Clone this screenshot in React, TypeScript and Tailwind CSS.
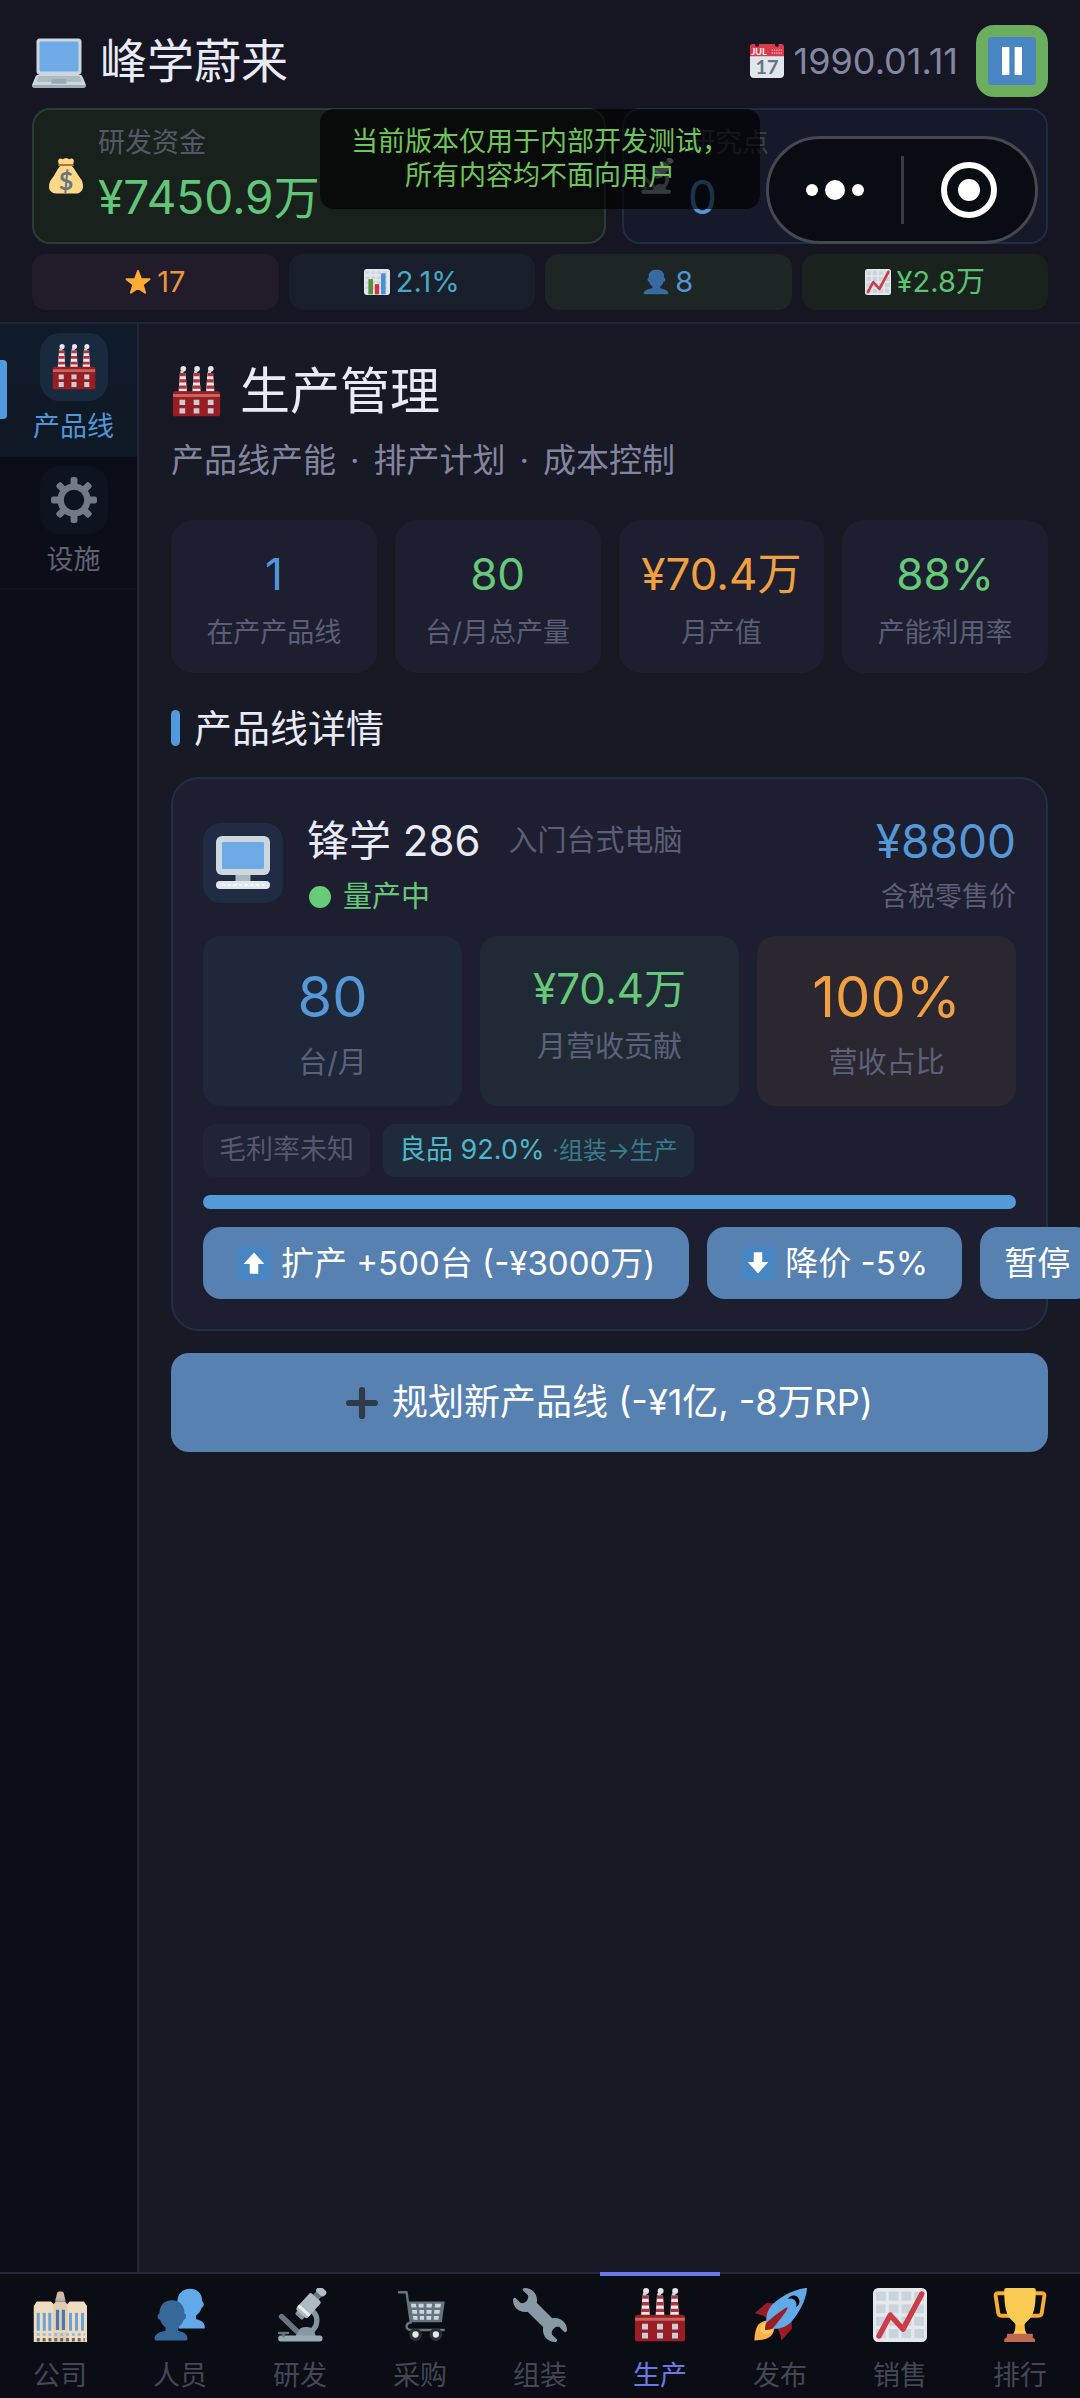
import type { ReactNode } from "react";

type IconProps = { className?: string };

function Svg({ className, children }: { className?: string; children: ReactNode }) {
  return (
    <svg viewBox="0 0 36 36" className={className} aria-hidden="true">
      {children}
    </svg>
  );
}

function LaptopIcon({ className }: IconProps) {
  return (
    <Svg className={className}>
      <path fill="#ccd6dd" d="M34 29.096c-.417-.963-.896-2.008-2-2.008h-1c1.104 0 2-.899 2-2.008V5.008C33 3.899 32.104 3 31 3H5c-1.104 0-2 .899-2 2.008V25.08c0 1.109.896 2.008 2 2.008H4c-1.104 0-1.667 1.004-2 2.008l-2 4.895C0 35.101.896 36 2 36h32c1.104 0 2-.899 2-2.009l-2-4.895z" />
      <path fill="#9aaab4" d="M.008 34.075l.006.057.17.692C.5 35.516 1.192 36 2 36h32c1.076 0 1.947-.855 1.992-1.925H.008z" />
      <path fill="#6daae6" d="M31 24.075c0 .555-.447 1.004-1 1.004H6c-.552 0-1-.449-1-1.004V6.013c0-.555.448-1.004 1-1.004h24c.553 0 1 .449 1 1.004v18.062z" />
      <path fill="#aebbc1" d="M32.906 31.042l-.76-2.175c-.239-.46-.635-.837-1.188-.837H5.11c-.552 0-.906.336-1.096.837l-.76 2.175c-.23.605.26 1.004.86 1.004h28.016c.6 0 1.045-.48.776-1.004z" />
      <path fill="#9aaab4" d="M22.375 33.113H13.5c-.6 0-.77-.361-.625-.861l.5-1.95c.094-.474.415-.302.815-.302h7.5c.4 0 .69.049.815.402l.5 1.85c.145.5-.03.861-.63.861z" />
    </Svg>
  );
}

function DesktopIcon({ className }: IconProps) {
  return (
    <Svg className={className}>
      <path fill="#aab8c2" d="M13 23h10v7H13z" />
      <rect fill="#ccd6dd" width="36" height="26" rx="4" />
      <rect fill="#6daae6" x="4" y="4" width="28" height="18" rx=".8" />
      <rect fill="#e1e8ed" y="30" width="36" height="5.4" rx="2.7" />
      <path stroke="#fff" strokeWidth="1.4" strokeDasharray="2 1.8" d="M4 32.7h28" />
    </Svg>
  );
}

function CalendarIcon({ className }: IconProps) {
  return (
    <Svg className={className}>
      <path fill="#e0e7ec" d="M36 32c0 2.209-1.791 4-4 4H4c-2.209 0-4-1.791-4-4V9h36z" />
      <path fill="#d83c4b" d="M0 3c0-2 1-3 3-3h30c2 0 3 1 3 3v10H0z" />
      <circle fill="#151621" cx="7.5" cy="1" r="2" />
      <circle fill="#151621" cx="28.5" cy="1" r="2" />
      <path stroke="#f4abba" strokeWidth="1.4" strokeDasharray="1.4 1" d="M23 6.5h11M23 9.5h11" />
      <text x="1.5" y="11.5" fontSize="9.5" fontWeight="700" fill="#fff" fontFamily="Lato">JUL</text>
      <text x="18" y="32" fontSize="21" fontWeight="700" fill="#66757f" fontFamily="Lato" textAnchor="middle">17</text>
    </Svg>
  );
}

function MoneyBagIcon({ className }: IconProps) {
  return (
    <Svg className={className}>
      <path fill="#fdd888" d="M31.9 19.6c1.6 2.4 3.5 5 3.1 9.4-.3 4-3.5 6.5-6.5 6.5H8c-4 0-7-3-7-6.5 0-4 1-6 3-8.5 3-3.5 4.5-8.5 8-12.500h12c3.500 4 5 8 7.900 11.600z" />
      <path fill="#fdd888" d="M11 6.500C10 4 9.500 1.500 11.500.7c1.500-.6 2 .8 3.200.5 1.300-.4 2-1.200 3.300-1.200s2 .8 3.300 1.200c1.200.3 1.700-1.100 3.200-.5 2 .8 1.500 3.300.5 5.800z" />
      <path stroke="#bf6952" strokeWidth="1.8" strokeLinecap="round" d="M11 7.200h14" />
      <text x="18" y="31.5" fontSize="25" fontWeight="700" fill="#67757f" fontFamily="Lato" textAnchor="middle">$</text>
    </Svg>
  );
}

function StarIcon({ className }: IconProps) {
  return (
    <Svg className={className}>
      <path fill="#ffac33" stroke="#ffac33" strokeWidth="2.5" strokeLinejoin="round" d="M18 2.500l4.100 11.200 11.900.4-9.400 7.300 3.300 11.500L18 26.200l-9.900 6.700 3.300-11.500L2 14.100l11.900-.4z" />
    </Svg>
  );
}

function BarsIcon({ className }: IconProps) {
  return (
    <Svg className={className}>
      <rect fill="#e1e8ed" width="36" height="36" rx="4" />
      <path stroke="#ccd6dd" strokeWidth="4" strokeDasharray="5.5 2.5" d="M2 5h32M2 12h32M2 19h32M2 26h32" />
      <path fill="#5c913b" d="M6 14h6.500v21H6z" />
      <path fill="#dd2e44" d="M15 21h6v14h-6z" />
      <path fill="#4a90d6" d="M23.500 6H30v29h-6.500z" />
    </Svg>
  );
}

function PersonIcon({ className }: IconProps) {
  return (
    <Svg className={className}>
      <path fill="#366aa0" d="M24 26.799v-2.566c2-1.348 4.080-3.779 4.703-6.896.186.103.206.170.413.170.991 0 1.709-1.287 1.709-2.873 0-1.562-.823-2.827-1.794-2.865.187-.674.293-1.577.293-2.735C29.324 5.168 26 .527 18.541.527c-6.629 0-10.777 4.641-10.777 8.507 0 1.123.069 2.043.188 2.755-.911.137-1.629 1.352-1.629 2.845 0 1.587.804 2.873 1.796 2.873.206 0 .025-.067.209-.170C8.952 20.453 11 22.885 13 24.232v2.414c-5 .645-12 3.437-12 6.230v1.061C1 35 2.076 35 3.137 35h29.725C33.924 35 35 35 35 33.938v-1.061c0-2.615-6-5.225-11-6.078z" />
    </Svg>
  );
}

function PeopleIcon({ className }: IconProps) {
  return (
    <Svg className={className}>
      <path fill="#62a9ea" d="M16.200 9.500c0-5.500 3.500-9 8.600-9 5 0 8 3.300 8 8.300.8.700 1.200 1.400 1 2.600-.2 1.300-1 1.600-1.400 1.800-.6 2.200-1.900 4-3.700 5.200v2.400c2.800.5 5.800 2 5.800 5V27H17z" />
      <path fill="#386899" d="M4.300 17c0-5.400 3.200-8.800 8.300-8.800s8.400 3.400 8.400 8.800c.8.200 1.200 1 1 2.200-.2 1.300-.8 2-1.500 2-.7 2-2 3.800-3.700 4.900v2.400c2.800.6 6.200 2 6.200 5.200 0 .8-.3 1.300-1.200 1.300H2.200c-.8 0-1.200-.5-1.200-1.300 0-3.200 4.200-4.600 7.300-5.200v-2.400c-1.700-1.100-3-2.900-3.600-4.900-.8 0-1.400-.7-1.600-2-.1-1.200.3-2 1.200-2.200z" />
    </Svg>
  );
}

function TrendIcon({ className }: IconProps) {
  return (
    <Svg className={className}>
      <rect fill="#e4e9ed" width="36" height="36" rx="3.5" />
      <path stroke="#cbd4da" strokeWidth="6" strokeDasharray="6.5 2" d="M2 5.500h32M2 13.800h32M2 22.100h32M2 30.400h32" />
      <path fill="none" stroke="#cd3b49" strokeWidth="3.6" strokeLinecap="round" strokeLinejoin="round" d="M4 32L11.500 18l8.500 9.500L32.500 4" />
    </Svg>
  );
}

function FactoryIcon({ className }: IconProps) {
  return (
    <Svg className={className}>
      {[8.3, 18, 27.7].map((x) => (
        <g key={x}>
          <circle cx={x + 0.4} cy="2" r="2" fill="#e1e8ed" />
          <circle cx={x - 0.6} cy="4.2" r="1.2" fill="#ccd6dd" />
          <path d={`M${x - 2} 5h4l.9 13h-5.800z`} fill="#f5e8ea" />
          <path d={`M${x - 2} 5h4l.1 2.200h-4.200zM${x - 2.3} 9.400h4.600l.1 2.200h-4.800zM${x - 2.6} 13.800h5.200l.1 2.200h-5.400z`} fill="#b0323f" />
        </g>
      ))}
      <path fill="#991d24" d="M1.300 19.500c0-1 .7-1.700 1.700-1.700h30c1 0 1.700.7 1.700 1.700v14.800c0 .7-.5 1.200-1.200 1.200h-31c-.7 0-1.200-.5-1.200-1.200z" />
      <path fill="#c8655a" d="M1.500 19.800h33v2.100h-33z" />
      <path fill="#c9cdd4" d="M6 23.800h4v3.800H6zM16 23.800h4v3.800h-4zM26 23.800h4v3.800h-4zM6 29.800h4v3.800H6zM16 29.800h4v3.800h-4zM26 29.800h4v3.800h-4z" />
    </Svg>
  );
}

function GearIcon({ className }: IconProps) {
  return (
    <Svg className={className}>
      <circle cx="18" cy="18" r="10.5" fill="none" stroke="#737a84" strokeWidth="5" />
      {[0, 45, 90, 135, 180, 225, 270, 315].map((angle) => (
        <rect key={angle} x="15.3" y="0" width="5.4" height="8" rx="1.8" fill="#737a84" transform={`rotate(${angle} 18 18)`} />
      ))}
    </Svg>
  );
}

function OfficeIcon({ className }: IconProps) {
  return (
    <Svg className={className}>
      <path fill="#f0dcc0" d="M.5 12l2-3h9.500l2 2v25H.5zM22.500 11l2-2h9.500l2 3v24H22.500z" />
      <path fill="#e2cdb3" d="M13.500 11l1.800-2h5.900l1.800 2v25h-9.500z" />
      <path fill="#d9b79c" d="M16 3.500c0-.8.700-1.200 2.200-1.200s2.300.4 2.300 1.200l1.300 5.500h-7z" />
      <path stroke="#8fb4d2" strokeWidth="1.6" strokeDasharray="1.6 .7" d="M15 7.800h6.500" />
      <path fill="#6ba3d6" d="M2.500 16.500h2v12h-2zM6.500 16.500h2v12h-2zM10.200 16.500h2v12h-2zM24 16.500h2v12h-2zM28 16.500h2v12h-2zM32 16.500h2v12h-2z" />
      <path fill="#4a78ad" d="M15.300 14.500h2.100V28h-2.100zM19.200 14.500h2.100V28h-2.100z" />
      <path stroke="#8ebbe2" strokeWidth="1.8" strokeDasharray="2 1.9" d="M2.500 31h32" />
      <path stroke="#f0dcc0" strokeWidth=".8" d="M.5 29h35.500" />
      <path stroke="#6c6763" strokeWidth="2.2" strokeDasharray="2 1.9" d="M2.500 34.500h32" />
    </Svg>
  );
}

function MicroscopeIcon({ className }: IconProps) {
  return (
    <Svg className={className}>
      <path stroke="#6b7580" strokeWidth="3.6" strokeLinecap="round" d="M5.700 19l12 11.500" />
      <path fill="none" stroke="#8494a1" strokeWidth="3.6" d="M26.500 15.500c4 3.500 3.500 10-1 13.500" />
      <path fill="#8899a6" d="M15 32c1.500-1.500 1.500-6 7-6s5.500 3 6.500 6z" />
      <rect x="3.5" y="31.7" width="29.5" height="4" rx="1.8" fill="#9aaab5" />
      <path stroke="#66757f" strokeWidth="1.6" strokeLinecap="round" d="M4 30h6M7 30v2" />
      <g transform="rotate(42 23 12.5)">
        <rect x="20.5" y="-1.8" width="5" height="7" fill="#66757f" />
        <rect x="19.5" y="-3.5" width="7" height="4.6" rx="1.8" fill="#b4c0c8" />
        <rect x="19.8" y="18" width="6.5" height="3.6" rx="1" fill="#8494a1" />
        <rect x="18" y="4" width="10" height="15" rx="1.5" fill="#aebbc4" />
        <path fill="#e8eef2" d="M18 15h10v2H18z" />
      </g>
    </Svg>
  );
}

function CartIcon({ className }: IconProps) {
  return (
    <Svg className={className}>
      <path fill="none" stroke="#66757f" strokeWidth="1.6" strokeLinecap="round" strokeLinejoin="round" d="M4 2.800h5L11.900 23c-3.600.3-4 5 0 5h22" />
      <path fill="#66757f" d="M10.500 9H34.500l-2 13.800H12.300z" />
      <path fill="#ccd6dd" d="M12 10.500h3.300l.3 2.500h-3.300zM17 10.500h3.400v2.500h-3.200zM22.300 10.500h3.700l-.2 2.500h-3.500zM28 10.500h4l-.4 2.500h-3.800zM12.700 14.600h3.200l.2 2.500h-3.100zM17.500 14.600h3.200v2.500h-3zM22.300 14.600h3.500l-.2 2.500h-3.300zM27.600 14.600h3.700l-.4 2.500h-3.500zM13.300 18.700h3l.1 2.400h-2.800zM17.900 18.700h2.800v2.400h-2.700zM22.300 18.700h3.200l-.1 2.400h-3.100zM27.300 18.700h3.300l-.3 2.400h-3.200z" />
      <circle cx="15" cy="31" r="3.2" fill="#e6e9ec" stroke="#292f33" strokeWidth="2.2" />
      <circle cx="28.6" cy="31" r="3.2" fill="#e6e9ec" stroke="#292f33" strokeWidth="2.2" />
    </Svg>
  );
}

function WrenchIcon({ className }: IconProps) {
  return (
    <Svg className={className}>
      <path fill="#8899a6" d="M27.989 19.977c-.622 0-1.225.078-1.806.213L15.811 9.818c.134-.581.212-1.184.212-1.806C16.023 3.587 12.436 0 8.012 0 7.110 0 5.910.916 6.909 1.915l2.997 2.997s.999 1.998-.999 3.995-3.996.998-3.996.998L1.915 6.909C.916 5.910 0 7.105 0 8.012c0 4.425 3.587 8.012 8.012 8.012.622 0 1.225-.078 1.806-.212l10.371 10.371c-.135.581-.213 1.184-.213 1.806 0 4.425 3.588 8.011 8.012 8.011.901 0 2.101-.916 1.102-1.915l-2.997-2.997s-.999-1.998.999-3.995 3.995-.999 3.995-.999l2.997 2.997c1 .999 1.916-.196 1.916-1.102 0-4.425-3.587-8.012-8.011-8.012z" />
    </Svg>
  );
}

function RocketIcon({ className }: IconProps) {
  return (
    <Svg className={className}>
      <path fill="#9b1c23" d="M1 17l8-7 16 1 1 16-7 8s.001-5.999-6-12-12-6-12-6z" />
      <path fill="#fdb04c" d="M.973 35s-.036-7.979 2.985-11S15 21.187 15 21.187 14.999 29 11.999 32c-3 3-11.026 3-11.026 3z" />
      <circle fill="#fdcb58" cx="8.999" cy="27" r="4" />
      <path fill="#62a9ea" d="M35.999 0s-10 0-22 10c-6 5-6 14-4 16s11 2 16-4c10-12 10-22 10-22z" />
      <path d="M26.999 5c-1.623 0-3.013.971-3.641 2.360.502-.227 1.055-.360 1.641-.360 2.209 0 4 1.791 4 4 0 .586-.133 1.139-.359 1.640 1.389-.627 2.359-2.017 2.359-3.640 0-2.209-1.791-4-4-4z" />
      <path fill="#9b1c23" d="M8 28s0-4 1-5 13.001-10.999 14-10-9.001 13-10.001 14S8 28 8 28z" />
    </Svg>
  );
}

function TrophyIcon({ className }: IconProps) {
  return (
    <Svg className={className}>
      <path fill="none" stroke="#f9a937" strokeWidth="2.6" strokeLinejoin="round" d="M8.500 3.500H3.200c-1.200 0-1.600.7-1.400 2l1.700 11.200c.2 1.300.8 1.800 2 1.800H12M27.500 3.500h5.300c1.200 0 1.600.7 1.400 2l-1.700 11.200c-.2 1.300-.8 1.800-2 1.800H24" />
      <path fill="#fbcc54" d="M7.500 1.500c0-1 .5-1.500 1.500-1.500h18c1 0 1.500.5 1.500 1.500C28.500 13 27 18 24 21c-2 2-3 2.500-3 4 0 2.500.5 4 2 6.500H13c1.500-2.500 2-4 2-6.500 0-1.500-1-2-3-4C9 18 7.500 13 7.500 1.500z" />
      <path fill="#ffac33" d="M15 25h6l.5 2.500c-2 1.500-5 1.500-7 0z" opacity=".5" />
      <path fill="#c1694f" d="M9.500 30.500h17v2.800c1 0 1.500.4 1.500 1.200V36H7.500v-1.500c0-.8.5-1.200 1.500-1.200z" />
    </Svg>
  );
}

function PauseIcon({ className }: IconProps) {
  return (
    <Svg className={className}>
      <rect fill="#4a86c4" width="36" height="36" rx="3" />
      <path fill="#fff" d="M10.500 7.500H16v21h-5.500zM20 7.500h5.500v21H20z" />
    </Svg>
  );
}

function ArrowIcon({ className, down }: IconProps & { down?: boolean }) {
  return (
    <Svg className={className}>
      <rect fill="#4786c3" width="36" height="36" rx="4" />
      <path fill="#fff" d="M18 7l11 12h-6.500v10.500h-9V19H7z" transform={down ? "rotate(180 18 18)" : undefined} />
    </Svg>
  );
}

function PlusIcon({ className }: IconProps) {
  return (
    <Svg className={className}>
      <path stroke="#2f3b48" strokeWidth="7" strokeLinecap="round" d="M18 3.500v29M3.500 18h29" />
    </Svg>
  );
}

const chips = [
  { Icon: StarIcon, value: "17", style: "bg-[#221b2a] text-[#e8963f]" },
  { Icon: BarsIcon, value: "2.1%", style: "bg-[#191e2d] text-[#4aa8c4]" },
  { Icon: PersonIcon, value: "8", style: "bg-[#1d2525] text-[#5295d6]" },
  { Icon: TrendIcon, value: "¥2.8万", style: "bg-[#19221c] text-[#5cc374]" },
];

const stats = [
  { value: "1", label: "在产产品线", color: "text-[#5197d9]" },
  { value: "80", label: "台/月总产量", color: "text-[#66c879]" },
  { value: "¥70.4万", label: "月产值", color: "text-[#f0a040]" },
  { value: "88%", label: "产能利用率", color: "text-[#66c879]" },
];

const tiles = [
  { value: "80", label: "台/月", box: "bg-[#1f273b]", text: "text-[56px] leading-[74px] text-[#5498d8]" },
  { value: "¥70.4万", label: "月营收贡献", box: "bg-[#202a35]", text: "text-[42px] leading-[58px] text-[#66c879]" },
  { value: "100%", label: "营收占比", box: "bg-[#2a2730]", text: "text-[56px] leading-[74px] text-[#f0a040]" },
];

const tabs = [
  { Icon: OfficeIcon, label: "公司" },
  { Icon: PeopleIcon, label: "人员" },
  { Icon: MicroscopeIcon, label: "研发" },
  { Icon: CartIcon, label: "采购" },
  { Icon: WrenchIcon, label: "组装" },
  { Icon: FactoryIcon, label: "生产", active: true },
  { Icon: RocketIcon, label: "发布" },
  { Icon: TrendIcon, label: "销售" },
  { Icon: TrophyIcon, label: "排行" },
];

function Header() {
  return (
    <header className="border-b-2 border-[#222638] bg-[#151621] px-8 pt-6 pb-3">
      <div className="flex items-center">
        <LaptopIcon className="size-[54px] shrink-0" />
        <h1 className="ml-3.5 text-[47px] leading-[74px] text-[#e8eaf6]">峰学蔚来</h1>
        <CalendarIcon className="ml-auto size-[34px]" />
        <time className="ml-2.5 text-[36px] text-[#8487a3]">1990.01.11</time>
        <button type="button" aria-label="暂停" className="ml-[18px] flex size-[72px] items-center justify-center rounded-[18px] bg-[#6bae5d]">
          <PauseIcon className="size-12" />
        </button>
      </div>

      <div className="mt-2.5 flex gap-4">
        <div className="flex h-[136px] flex-[11] items-center gap-3.5 rounded-[18px] border-2 border-[#2a3d35] bg-[#18211c] px-3.5">
          <MoneyBagIcon className="size-9" />
          <div>
            <div className="text-[27px] leading-9 text-[#555866]">研发资金</div>
            <div className="mt-1.5 text-[46px] leading-[60px] text-[#62c67a]">¥7450.9万</div>
          </div>
        </div>
        <div className="flex h-[136px] flex-[8] items-center gap-3.5 rounded-[18px] border-2 border-[#1e2c47] bg-[#161929] px-3.5">
          <MicroscopeIcon className="size-9" />
          <div>
            <div className="text-[27px] leading-9 text-[#3c3e4c]">研究点</div>
            <div className="mt-1.5 text-[46px] leading-[60px] text-[#5295d6]">0</div>
          </div>
        </div>
      </div>

      <div className="mt-2.5 grid grid-cols-4 gap-2.5">
        {chips.map(({ Icon, value, style }) => (
          <div key={value} className={`flex h-14 items-center justify-center gap-1.5 rounded-[14px] text-[29px] ${style}`}>
            <Icon className="size-[26px]" />
            {value}
          </div>
        ))}
      </div>
    </header>
  );
}

// Host app chrome that floats over the header
function HostOverlay() {
  return (
    <>
      <p className="absolute top-[109px] left-1/2 w-[440px] -translate-x-1/2 rounded-[14px] bg-black/65 py-4 text-center text-[27px] leading-[34px] whitespace-nowrap text-[#70c45c]">
        当前版本仅用于内部开发测试，
        <br />
        所有内容均不面向用户
      </p>
      <div className="absolute top-[136px] right-[42px] flex h-[108px] w-[272px] items-center rounded-full border-3 border-[#454850] bg-[#0a0c13]">
        <button type="button" aria-label="更多" className="flex h-full flex-1 items-center justify-center gap-[7px]">
          <span className="size-3 rounded-full bg-white" />
          <span className="size-5 rounded-full bg-white" />
          <span className="size-3 rounded-full bg-white" />
        </button>
        <span className="h-[68px] w-[3px] bg-[#3a3c44]" />
        <button type="button" aria-label="关闭" className="flex h-full flex-1 items-center justify-center">
          <span className="flex size-14 items-center justify-center rounded-full border-6 border-white">
            <span className="size-[22px] rounded-full bg-white" />
          </span>
        </button>
      </div>
    </>
  );
}

function Sidebar() {
  return (
    <nav className="w-[139px] shrink-0 border-r-2 border-[#232637] bg-[#0b0d17]">
      <button type="button" className="relative flex h-[133px] w-full flex-col items-center bg-linear-to-b from-[#101b29] to-[#0f1825] pt-[9px] pl-2.5 text-[27px] leading-9 text-[#5295d6]">
        <span className="absolute top-9 left-0 h-[59px] w-[7px] rounded-r bg-[#529ae0]" />
        <span className="mb-2 flex size-[68px] items-center justify-center rounded-[20px] bg-[#1a2a3e]">
          <FactoryIcon className="size-[46px]" />
        </span>
        产品线
      </button>
      <button type="button" className="flex h-[133px] w-full flex-col items-center border-b-2 border-[#10131d] pt-[9px] pl-2.5 text-[27px] leading-9 text-[#5f6273]">
        <span className="mb-2 flex size-[68px] items-center justify-center rounded-[20px] bg-[#0d141f]">
          <GearIcon className="size-[46px]" />
        </span>
        设施
      </button>
    </nav>
  );
}

function ProductCard() {
  return (
    <section className="mt-6 rounded-[28px] border-2 border-[#232e45] bg-[#1d1f30] px-[30px] pt-8 pb-[30px]">
      <div className="flex">
        <div className="mt-3 flex size-20 items-center justify-center rounded-[18px] bg-[#202c44]">
          <DesktopIcon className="size-[54px]" />
        </div>
        <div className="ml-6">
          <h3 className="flex items-center text-[42px] leading-[60px] text-[#e8eaf6]">
            锋学 286<span className="ml-7 text-[29px] text-[#5b5e76]">入门台式电脑</span>
          </h3>
          <p className="mt-1.5 flex items-center gap-3 pl-0.5 text-[29px] leading-10 text-[#66c879]">
            <span className="size-[22px] rounded-full bg-[#66cc77]" />
            量产中
          </p>
        </div>
        <div className="ml-auto text-right">
          <div className="text-[46px] leading-[60px] text-[#5498d8]">¥8800</div>
          <div className="mt-2 text-[27px] leading-9 text-[#5b5e76]">含税零售价</div>
        </div>
      </div>

      <div className="mt-[19px] grid grid-cols-3 gap-[18px]">
        {tiles.map((tile) => (
          <div key={tile.label} className={`rounded-[18px] py-6 text-center ${tile.box}`}>
            <div className={tile.text}>{tile.value}</div>
            <div className="mt-2.5 text-[29px] leading-[38px] text-[#5d6079]">{tile.label}</div>
          </div>
        ))}
      </div>

      <div className="mt-[18px] flex gap-[13px] text-[27px] leading-[52px]">
        <span className="rounded-[12px] bg-[#212336] px-4 text-[#555870]">毛利率未知</span>
        <span className="rounded-[12px] bg-[#1f2a3b] px-4 text-[#4db8c8]">
          良品 92.0% <span className="text-2xl leading-[52px] text-[#377b89]">·组装→生产</span>
        </span>
      </div>

      <div className="mt-[18px] h-3.5 rounded-full bg-[#529ad8]" />

      <div className="mt-[18px] flex gap-[18px] text-[33px] leading-[72px] whitespace-nowrap text-white">
        <button type="button" className="flex shrink-0 items-center gap-2.5 rounded-[18px] bg-[#5781b0] px-[34px]">
          <ArrowIcon className="size-[34px]" />
          扩产 +500台 (-¥3000万)
        </button>
        <button type="button" className="flex shrink-0 items-center gap-2.5 rounded-[18px] bg-[#5781b0] px-[34px]">
          <ArrowIcon className="size-[34px]" down />
          降价 -5%
        </button>
        <button type="button" className="shrink-0 rounded-[18px] bg-[#5781b0] px-6">
          暂停
        </button>
      </div>
    </section>
  );
}

function Main() {
  return (
    <main className="min-w-0 flex-1 overflow-hidden bg-[#171924] px-8 pt-8">
      <h2 className="flex items-center gap-[18px] text-[50px] leading-[70px] text-[#e8eaf6]">
        <FactoryIcon className="size-[51px]" />
        生产管理
      </h2>
      <p className="mt-3 flex gap-3.5 text-[33px] leading-[44px] text-[#8385a0]">
        <span>产品线产能</span>
        <span>·</span>
        <span>排产计划</span>
        <span>·</span>
        <span>成本控制</span>
      </p>

      <div className="mt-[38px] grid grid-cols-4 gap-[18px]">
        {stats.map((stat) => (
          <div key={stat.label} className="rounded-[22px] bg-[#1d1f30] pt-6 pb-[22px] text-center">
            <div className={`text-[44px] leading-[60px] ${stat.color}`}>{stat.value}</div>
            <div className="mt-[11px] text-[27px] leading-9 text-[#5b5e76]">{stat.label}</div>
          </div>
        ))}
      </div>

      <h3 className="mt-[30px] flex items-center gap-3.5 text-[38px] leading-[50px] text-[#e8eaf6]">
        <span className="h-9 w-[9px] rounded-full bg-[#529ae0]" />
        产品线详情
      </h3>

      <ProductCard />

      <button type="button" className="mt-[22px] flex w-full items-center justify-center gap-3.5 rounded-[18px] bg-[#5781b0] text-[36px] leading-[99px] text-white">
        <PlusIcon className="size-8" />
        规划新产品线 (-¥1亿, -8万RP)
      </button>
    </main>
  );
}

function TabBar() {
  return (
    <nav className="grid grid-cols-9 border-t-2 border-[#252838] bg-[#0a0d14]">
      {tabs.map(({ Icon, label, active }) => (
        <button key={label} type="button" className={`relative flex flex-col items-center pt-3.5 pb-1 text-[27px] leading-9 ${active ? "text-[#6c78e8]" : "text-[#444756]"}`}>
          {active && <span className="absolute inset-x-0 -top-0.5 h-1 bg-[#6c78e8]" />}
          <Icon className="mb-4 size-[54px]" />
          {label}
        </button>
      ))}
    </nav>
  );
}

export default function App() {
  return (
    <div className="relative flex min-h-screen flex-col overflow-hidden bg-[#171924] font-[Inter,'Noto_Sans_CJK_SC',sans-serif]" lang="zh-CN">
      <Header />
      <div className="flex flex-1">
        <Sidebar />
        <Main />
      </div>
      <TabBar />
      <HostOverlay />
    </div>
  );
}
